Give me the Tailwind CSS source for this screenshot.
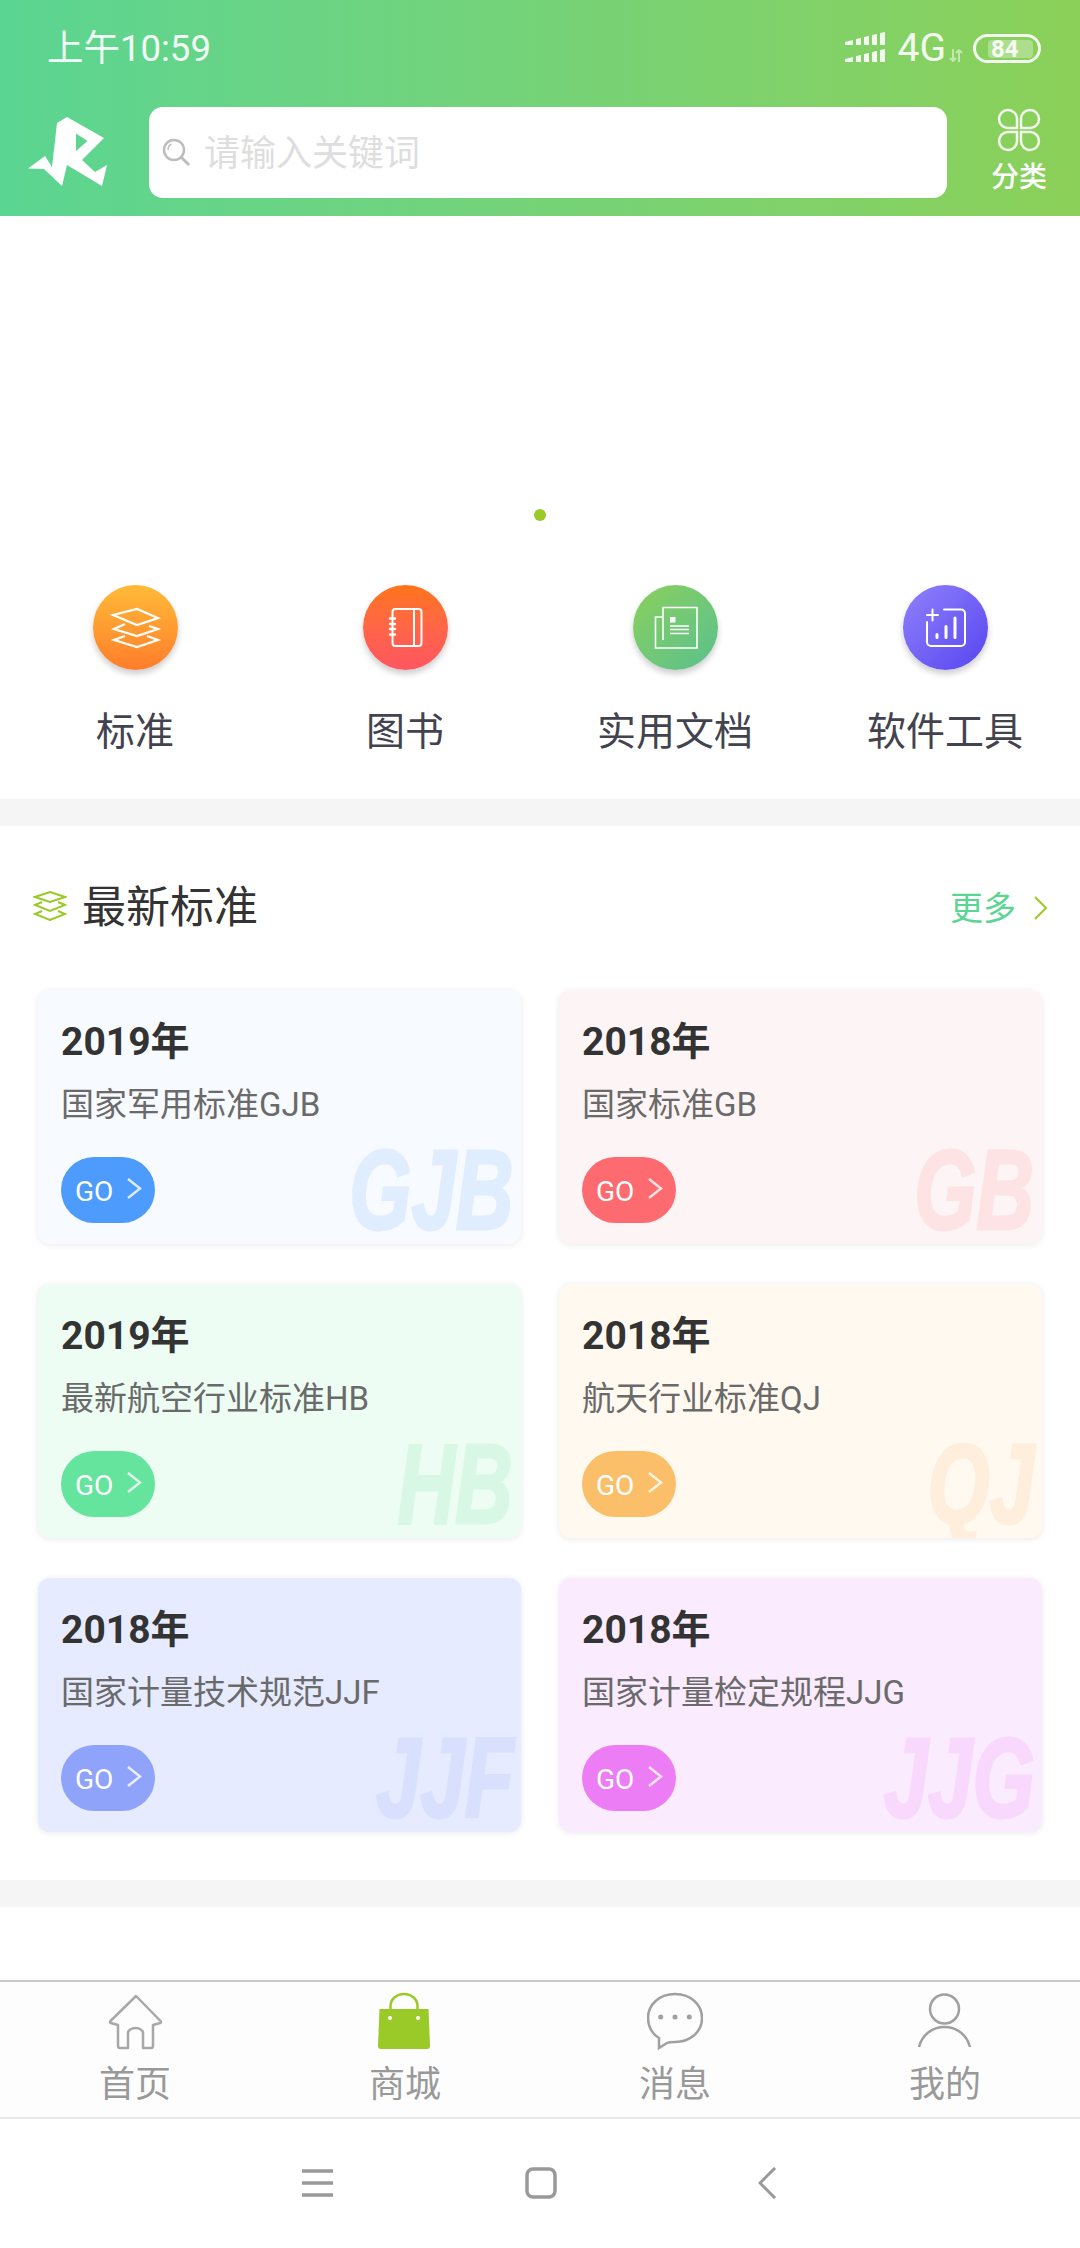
<!DOCTYPE html>
<html lang="zh-CN">
<head>
  <meta charset="UTF-8" />
  <meta name="viewport" content="width=device-width, initial-scale=1.0"/>
  <title>商城</title>
  <script src="https://cdn.jsdelivr.net/npm/@tailwindcss/browser@4"></script>
</head>
<body class="bg-white font-['Roboto','Noto_Sans_CJK_SC',sans-serif]">
<div class="w-[1080px] h-[2248px] overflow-hidden flex flex-col">

  <!-- header -->
  <header class="h-[216px] shrink-0 bg-linear-to-r from-[#5ad592] to-[#8bd058] text-white">
    <div class="h-[97px] flex items-center pl-[47px] pr-[39px]">
      <span class="mt-[2px] text-[36.500px] leading-none text-white/90">上午10:59</span>
      <div class="ml-auto flex items-center">
        <svg class="w-[42px] h-[34px] opacity-90" viewBox="0 0 42 34" fill="#fff">
          <path d="M0 10l8-2v5H0zM11 7l5-1v7h-5zM19 5l5-1v9h-5zM27 3l5-1v11h-5zM35 1l5-1v13h-5z"/>
          <path d="M0 27l8-2v5H0zM11 24l5-1v7h-5zM19 22l5-1v9h-5zM27 20l5-1v11h-5zM35 18l5-1v13h-5z"/>
        </svg>
        <span class="ml-[11px] text-[39px] leading-none text-white/90">4G</span>
        <svg class="ml-[3px] mt-[14px] w-[14px] h-[13px] opacity-50" viewBox="0 0 14 13" fill="none" stroke="#fff" stroke-width="2">
          <path d="M4 0v12M1 9l3 3 3-3M10 13V1M7 4l3-3 3 3"/>
        </svg>
        <div class="ml-[10px] w-[68px] h-[29px] rounded-full border-[3px] border-white/90 relative flex items-center pl-[12px] pr-[5px]">
          <div class="h-[18px] w-full rounded-[4px] bg-white/30"></div>
          <span class="absolute left-[15px] top-0 h-full flex items-center text-[24px] font-bold leading-none text-white/90">84</span>
        </div>
      </div>
    </div>
    <div class="h-[119px] flex items-start">
      <svg class="mt-[20px] ml-[28px] w-[80px] h-[70px]" viewBox="28 117 80 70" fill="#fff" fill-rule="evenodd">
        <path d="M28 168.500L45 156 52 167 57 123 67 117 104 138 82 160 95 172 107 165 102 186 67 165 62 186 44 169zM76 133.500L87.500 141 76 151z"/>
      </svg>
      <div class="mt-[10px] ml-[41px] w-[798px] h-[91px] bg-white rounded-[14px] flex items-center">
        <svg class="ml-[13px] w-[30px] h-[30px]" viewBox="0 0 30 30" fill="none" stroke="#bdbdbd" stroke-width="2.500">
          <circle cx="12" cy="12" r="10"/>
          <path d="M19.500 19.500L27 27" stroke-width="3"/>
          <path d="M6 12c0-3 1.500-5 3.500-6" stroke-width="1.500"/>
        </svg>
        <span class="ml-[12px] mt-[2px] text-[36px] leading-none text-[#dedede]">请输入关键词</span>
      </div>
      <div class="mt-[11px] ml-[22px] w-[100px] flex flex-col items-center">
        <svg class="w-[44px] h-[44px]" viewBox="0 0 44 44" fill="none" stroke="#fff" stroke-opacity="0.900" stroke-width="2.500">
          <path d="M20 20h-9.500a9 9 0 1 1 9.500-9.500z"/>
          <path d="M24 20h9.500a9 9 0 1 0-9.500-9.500z"/>
          <path d="M20 24h-9.500a9 9 0 1 0 9.500 9.500z"/>
          <path d="M24 24h9.500a9 9 0 1 1-9.500 9.500z"/>
        </svg>
        <span class="mt-[12px] text-[28px] leading-none font-medium">分类</span>
      </div>
    </div>
  </header>

  <!-- banner -->
  <div class="h-[344px] shrink-0 flex items-end justify-center pb-[39px]">
    <div class="w-[12px] h-[12px] rounded-full bg-[#9aca27]"></div>
  </div>

  <!-- categories -->
  <nav class="h-[239px] shrink-0 grid grid-cols-4 pt-[25px]">
    <div class="flex flex-col items-center">
      <div class="w-[85px] h-[85px] rounded-full bg-linear-to-b from-[#ffba38] to-[#ff7c2a] shadow-[0_4px_6px_rgba(0,0,0,0.2)]">
        <svg class="w-[85px] h-[85px]" viewBox="0 0 85 85" fill="none" stroke="#fff" stroke-width="2.200">
          <path d="M20 30L44 24 65 33 44 40z"/>
          <path d="M32 39L21 44 44 51 65 44 56 41"/>
          <path d="M32 51L21 55 44 62 65 55 54 51"/>
        </svg>
      </div>
      <span class="mt-[38px] text-[39px] leading-[48px] text-[#43434f]">标准</span>
    </div>
    <div class="flex flex-col items-center">
      <div class="w-[85px] h-[85px] rounded-full bg-linear-to-b from-[#ff7414] to-[#ff5560] shadow-[0_4px_6px_rgba(0,0,0,0.2)]">
        <svg class="w-[85px] h-[85px]" viewBox="0 0 85 85" fill="none" stroke="#fff" stroke-width="2">
          <rect x="29.500" y="24" width="29" height="37" rx="3"/>
          <path d="M51 24v37"/>
          <path d="M27 33.500h5M27 39h5M27 44h5M27 49.500h5" stroke-width="2.400" stroke-linecap="round"/>
        </svg>
      </div>
      <span class="mt-[38px] text-[39px] leading-[48px] text-[#43434f]">图书</span>
    </div>
    <div class="flex flex-col items-center">
      <div class="w-[85px] h-[85px] rounded-full bg-linear-to-br from-[#8ad05a] to-[#58c08c] shadow-[0_4px_6px_rgba(0,0,0,0.2)]">
        <svg class="w-[85px] h-[85px]" viewBox="0 0 85 85" fill="none" stroke="#fff" stroke-width="1.600">
          <path d="M30 55V22.500H64V63H22.500V32H30"/>
          <path d="M37 32h5.500v5.500H37z" fill="#fff" stroke="none"/>
          <path d="M37 41h19M37 44.500h19M37 48.500h19"/>
        </svg>
      </div>
      <span class="mt-[38px] text-[39px] leading-[48px] text-[#43434f]">实用文档</span>
    </div>
    <div class="flex flex-col items-center">
      <div class="w-[85px] h-[85px] rounded-full bg-linear-to-br from-[#9280fc] to-[#5842ef] shadow-[0_4px_6px_rgba(0,0,0,0.2)]">
        <svg class="w-[85px] h-[85px]" viewBox="0 0 85 85" fill="none" stroke="#fff" stroke-width="2" stroke-linecap="round">
          <path d="M41 24.500H58a4 4 0 0 1 4 4V57a4 4 0 0 1-4 4H28a4 4 0 0 1-4-4V37"/>
          <path d="M24 30h11M29.500 24.500v11"/>
          <path d="M34 49.500v3M43 41.500v11M52 33v19.500" stroke-width="3"/>
        </svg>
      </div>
      <span class="mt-[38px] text-[39px] leading-[48px] text-[#43434f]">软件工具</span>
    </div>
  </nav>

  <div class="h-[27px] shrink-0 bg-[#f5f5f5]"></div>

  <!-- section title -->
  <div class="h-[164px] shrink-0 flex items-center">
    <svg class="ml-[33px] mb-[5px] w-[34px] h-[30px]" viewBox="0 0 34 30" fill="none" stroke="#9aca27" stroke-width="2">
      <path d="M17 1l15 5-15 5L2 6z"/>
      <path d="M9 11l-7 3 15 6 15-6-7-3"/>
      <path d="M9 20l-7 3 15 6 15-6-7-3"/>
    </svg>
    <span class="ml-[15px] text-[44px] leading-none text-[#333]">最新标准</span>
    <span class="ml-auto text-[33px] leading-none text-[#5ad592]">更多</span>
    <svg class="ml-[17px] mr-[32px] w-[15px] h-[24px]" viewBox="0 0 15 24" fill="none" stroke="#9aca27" stroke-width="2">
      <path d="M2 1l11 11L2 23"/>
    </svg>
  </div>

  <!-- cards -->
  <div class="grid grid-cols-[483px_483px] gap-x-[38px] gap-y-[40px] pl-[38px] shrink-0">

    <div class="relative overflow-hidden h-[254px] rounded-[12px] bg-[#f7faff] shadow-[0_1px_6px_rgba(0,0,0,0.09)] pl-[23px] pt-[32px]">
      <div class="text-[39px] leading-[40px] font-bold text-[#333]">2019年</div>
      <div class="mt-[23px] text-[33px] leading-[40px] text-[#6a6a6a]">国家军用标准GJB</div>
      <div class="mt-[32px] w-[94px] h-[66px] rounded-full bg-[#4c9bfd] flex items-center text-white">
        <span class="ml-[14px] text-[28px] leading-none mt-[4px]">GO</span>
        <svg class="ml-[14px] mb-[3px] w-[15px] h-[24px]" viewBox="0 0 15 24" fill="none" stroke="#fff" stroke-opacity="0.800" stroke-width="2.500"><path d="M1 2l12 9.500L1 21"/></svg>
      </div>
      <span class="absolute right-[8px] top-[150px] text-[114px] leading-[100px] font-bold italic font-['Liberation_Sans',sans-serif] [-webkit-text-stroke:3px_currentColor] text-[#e0edfe] scale-x-[0.7] origin-right">GJB</span>
    </div>

    <div class="relative overflow-hidden h-[254px] rounded-[12px] bg-[#fdf5f5] shadow-[0_1px_6px_rgba(0,0,0,0.09)] pl-[23px] pt-[32px]">
      <div class="text-[39px] leading-[40px] font-bold text-[#333]">2018年</div>
      <div class="mt-[23px] text-[33px] leading-[40px] text-[#6a6a6a]">国家标准GB</div>
      <div class="mt-[32px] w-[94px] h-[66px] rounded-full bg-[#fd6a6f] flex items-center text-white">
        <span class="ml-[14px] text-[28px] leading-none mt-[4px]">GO</span>
        <svg class="ml-[14px] mb-[3px] w-[15px] h-[24px]" viewBox="0 0 15 24" fill="none" stroke="#fff" stroke-opacity="0.800" stroke-width="2.500"><path d="M1 2l12 9.500L1 21"/></svg>
      </div>
      <span class="absolute right-[8px] top-[150px] text-[114px] leading-[100px] font-bold italic font-['Liberation_Sans',sans-serif] [-webkit-text-stroke:3px_currentColor] text-[#fde3e3] scale-x-[0.7] origin-right">GB</span>
    </div>

    <div class="relative overflow-hidden h-[254px] rounded-[12px] bg-[#edfdf3] shadow-[0_1px_6px_rgba(0,0,0,0.09)] pl-[23px] pt-[32px]">
      <div class="text-[39px] leading-[40px] font-bold text-[#333]">2019年</div>
      <div class="mt-[23px] text-[33px] leading-[40px] text-[#6a6a6a]">最新航空行业标准HB</div>
      <div class="mt-[32px] w-[94px] h-[66px] rounded-full bg-[#64e49d] flex items-center text-white">
        <span class="ml-[14px] text-[28px] leading-none mt-[4px]">GO</span>
        <svg class="ml-[14px] mb-[3px] w-[15px] h-[24px]" viewBox="0 0 15 24" fill="none" stroke="#fff" stroke-opacity="0.800" stroke-width="2.500"><path d="M1 2l12 9.500L1 21"/></svg>
      </div>
      <span class="absolute right-[8px] top-[150px] text-[114px] leading-[100px] font-bold italic font-['Liberation_Sans',sans-serif] [-webkit-text-stroke:3px_currentColor] text-[#d8f8e5] scale-x-[0.7] origin-right">HB</span>
    </div>

    <div class="relative overflow-hidden h-[254px] rounded-[12px] bg-[#fff9f0] shadow-[0_1px_6px_rgba(0,0,0,0.09)] pl-[23px] pt-[32px]">
      <div class="text-[39px] leading-[40px] font-bold text-[#333]">2018年</div>
      <div class="mt-[23px] text-[33px] leading-[40px] text-[#6a6a6a]">航天行业标准QJ</div>
      <div class="mt-[32px] w-[94px] h-[66px] rounded-full bg-[#fabf68] flex items-center text-white">
        <span class="ml-[14px] text-[28px] leading-none mt-[4px]">GO</span>
        <svg class="ml-[14px] mb-[3px] w-[15px] h-[24px]" viewBox="0 0 15 24" fill="none" stroke="#fff" stroke-opacity="0.800" stroke-width="2.500"><path d="M1 2l12 9.500L1 21"/></svg>
      </div>
      <span class="absolute right-[8px] top-[150px] text-[114px] leading-[100px] font-bold italic font-['Liberation_Sans',sans-serif] [-webkit-text-stroke:3px_currentColor] text-[#ffeedb] scale-x-[0.7] origin-right">QJ</span>
    </div>

    <div class="relative overflow-hidden h-[254px] rounded-[12px] bg-[#e6ebff] shadow-[0_1px_6px_rgba(0,0,0,0.09)] pl-[23px] pt-[32px]">
      <div class="text-[39px] leading-[40px] font-bold text-[#333]">2018年</div>
      <div class="mt-[23px] text-[33px] leading-[40px] text-[#6a6a6a]">国家计量技术规范JJF</div>
      <div class="mt-[32px] w-[94px] h-[66px] rounded-full bg-[#8fa3fb] flex items-center text-white">
        <span class="ml-[14px] text-[28px] leading-none mt-[4px]">GO</span>
        <svg class="ml-[14px] mb-[3px] w-[15px] h-[24px]" viewBox="0 0 15 24" fill="none" stroke="#fff" stroke-opacity="0.800" stroke-width="2.500"><path d="M1 2l12 9.500L1 21"/></svg>
      </div>
      <span class="absolute right-[8px] top-[150px] text-[114px] leading-[100px] font-bold italic font-['Liberation_Sans',sans-serif] [-webkit-text-stroke:3px_currentColor] text-[#d8e0fe] scale-x-[0.7] origin-right">JJF</span>
    </div>

    <div class="relative overflow-hidden h-[254px] rounded-[12px] bg-[#faebfe] shadow-[0_1px_6px_rgba(0,0,0,0.09)] pl-[23px] pt-[32px]">
      <div class="text-[39px] leading-[40px] font-bold text-[#333]">2018年</div>
      <div class="mt-[23px] text-[33px] leading-[40px] text-[#6a6a6a]">国家计量检定规程JJG</div>
      <div class="mt-[32px] w-[94px] h-[66px] rounded-full bg-[#ec7df5] flex items-center text-white">
        <span class="ml-[14px] text-[28px] leading-none mt-[4px]">GO</span>
        <svg class="ml-[14px] mb-[3px] w-[15px] h-[24px]" viewBox="0 0 15 24" fill="none" stroke="#fff" stroke-opacity="0.800" stroke-width="2.500"><path d="M1 2l12 9.500L1 21"/></svg>
      </div>
      <span class="absolute right-[8px] top-[150px] text-[114px] leading-[100px] font-bold italic font-['Liberation_Sans',sans-serif] [-webkit-text-stroke:3px_currentColor] text-[#f8d8fc] scale-x-[0.7] origin-right">JJG</span>
    </div>
  </div>

  <div class="h-[48px] shrink-0"></div>
  <div class="h-[27px] shrink-0 bg-[#f5f5f5]"></div>
  <div class="h-[73px] shrink-0"></div>

  <!-- tab bar -->
  <nav class="h-[139px] shrink-0 grid grid-cols-4 border-t-2 border-b-2 border-t-[#c8c8c8] border-b-[#e8e8e8] bg-[#fdfdfd]">
    <div class="flex flex-col items-center pt-[10px]">
      <svg class="w-[56px] h-[58px]" viewBox="0 0 56 58" fill="none" stroke="#a8a8a8" stroke-width="2.500" stroke-linejoin="round">
        <path d="M29 4L3.500 29q-1.500 2 2 2.500L11 33v21q0 2 2 2h8V41a7.500 5 0 0 1 15 0v15h8q2 0 2-2V33l5.500-1.500q3.500-.500 2-2.500z"/>
      </svg>
      <span class="mt-[13px] text-[36px] leading-[44px] text-[#999]">首页</span>
    </div>
    <div class="flex flex-col items-center pt-[10px]">
      <svg class="w-[56px] h-[58px]" viewBox="0 0 56 58">
        <path d="M13.500 18V14a13.500 12 0 0 1 27 0v4" fill="none" stroke="#9aca27" stroke-width="2.500"/>
        <path d="M2.500 17h49L53 54a3 3 0 0 1-3 3H4a3 3 0 0 1-3-3z" fill="#9aca27"/>
        <circle cx="13" cy="26" r="2" fill="#fff"/>
        <circle cx="41" cy="26" r="2" fill="#fff"/>
      </svg>
      <span class="mt-[13px] text-[36px] leading-[44px] text-[#999]">商城</span>
    </div>
    <div class="flex flex-col items-center pt-[10px]">
      <svg class="w-[56px] h-[58px]" viewBox="0 0 56 58" fill="none" stroke="#a0a0a0" stroke-width="2.500">
        <path d="M12 56V46C5 42 1 34 1 26C1 12 13 2 28 2C43 2 55 12 55 26C55 40 43 50 28 50C25 50 22 50 20 51Z"/>
        <circle cx="13.700" cy="25" r="2.500" fill="#a0a0a0" stroke="none"/>
        <circle cx="28" cy="25" r="2.500" fill="#a0a0a0" stroke="none"/>
        <circle cx="42.300" cy="25" r="2.500" fill="#a0a0a0" stroke="none"/>
      </svg>
      <span class="mt-[13px] text-[36px] leading-[44px] text-[#999]">消息</span>
    </div>
    <div class="flex flex-col items-center pt-[10px]">
      <svg class="w-[56px] h-[58px]" viewBox="0 0 56 58" fill="none" stroke="#a0a0a0" stroke-width="2.500">
        <circle cx="27.500" cy="17" r="14.500"/>
        <path d="M2 55C5 43 15 35 27.500 35S50 43 53 55"/>
      </svg>
      <span class="mt-[13px] text-[36px] leading-[44px] text-[#999]">我的</span>
    </div>
  </nav>

  <!-- system nav -->
  <div class="flex-1 flex items-center bg-white pl-[302px] pb-[2px]">
    <svg class="w-[31px] h-[32px]" viewBox="0 0 31 32" stroke="#999" stroke-width="3.500"><path d="M0 4h31M0 16h31M0 28h31"/></svg>
    <svg class="ml-[192px] w-[32px] h-[32px]" viewBox="0 0 32 32" fill="none" stroke="#999" stroke-width="3.500"><rect x="2" y="2" width="28" height="28" rx="6"/></svg>
    <svg class="ml-[201px] w-[19px] h-[32px]" viewBox="0 0 19 32" fill="none" stroke="#999" stroke-width="3"><path d="M17 1L2 16l15 15"/></svg>
  </div>
</div>
</body>
</html>
